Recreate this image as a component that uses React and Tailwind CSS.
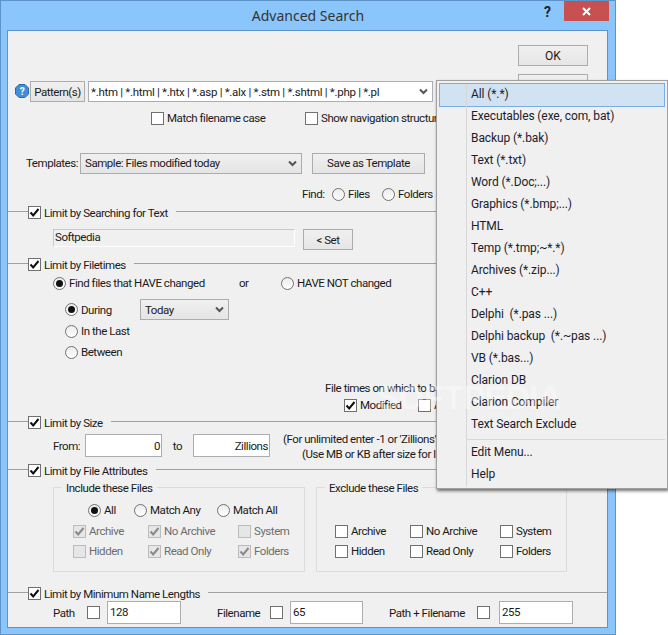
import React from 'react';

const MENU_ITEMS = [
    'All (*.*)',
    'Executables (exe, com, bat)',
    'Backup (*.bak)',
    'Text (*.txt)',
    'Word (*.Doc;...)',
    'Graphics (*.bmp;...)',
    'HTML',
    'Temp (*.tmp;~*.*)',
    'Archives (*.zip...)',
    'C++',
    'Delphi  (*.pas ...)',
    'Delphi backup  (*.~pas ...)',
    'VB (*.bas...)',
    'Clarion DB',
    'Clarion Compiler',
    'Text Search Exclude',
];

const Chevron = ({className = ''}) => (
    <svg width="9" height="7" viewBox="0 0 9 7" className={className}>
        <path d="M1 1.5 L4.5 5 L8 1.5" fill="none" stroke="#555" strokeWidth="2" />
    </svg>
);

const Check = ({checked, disabled, label, className = '', labelClass = ''}) => (
    <div className={`flex items-center h-4 ${className}`}>
        <span className={`w-[13px] h-[13px] border flex items-center justify-center shrink-0 ${disabled ? 'bg-[#e6e6e6] border-[#bcbcbc]' : 'bg-white border-[#707070]'}`}>
            {checked && (
                <svg width="11" height="11" viewBox="0 0 11 11">
                    <path d="M1.5 5.5 L4.2 8.5 L9.5 2" fill="none" stroke={disabled ? '#8a8a8a' : '#111'} strokeWidth="2" />
                </svg>
            )}
        </span>
        {label && <span className={`ml-[3px] whitespace-nowrap ${disabled ? 'text-[#6d6d6d]' : ''} ${labelClass}`}>{label}</span>}
    </div>
);

const Radio = ({checked, label, className = ''}) => (
    <div className={`flex items-center h-4 ${className}`}>
        <span className="w-[13px] h-[13px] rounded-full border border-[#707070] bg-gradient-to-b from-[#ececec] to-white flex items-center justify-center shrink-0">
            {checked && <span className="w-[7px] h-[7px] rounded-full bg-[#111]" />}
        </span>
        <span className="ml-[3px] whitespace-nowrap">{label}</span>
    </div>
);

const Button = ({children, className = ''}) => (
    <div className={`h-[21px] border border-[#acacac] bg-gradient-to-b from-[#f0f0f0] to-[#e5e5e5] flex items-center justify-center ${className}`}>
        {children}
    </div>
);

const Select = ({value, className = ''}) => (
    <div className={`h-[21px] border border-[#acacac] bg-gradient-to-b from-[#f0f0f0] to-[#e5e5e5] flex items-center justify-between pl-[4px] pr-[4px] ${className}`}>
        <span>{value}</span>
        <Chevron />
    </div>
);

const Input = ({value, className = ''}) => (
    <div className={`h-[23px] border border-[#abadb3] bg-white flex items-center ${className}`}>{value}</div>
);

const SectionHeader = ({label, className = ''}) => (
    <div className={`flex h-[13px] items-start ${className}`}>
        <div className="w-5 h-px bg-[#a0a0a0] mt-[5px]" />
        <Check checked label={label} className="h-[13px]" />
        <div className="flex-1 h-px bg-[#a0a0a0] mt-[5px] ml-2" />
    </div>
);

const MenuRow = ({label, active}) => (
    <div className={`flex ${active ? 'bg-[#d1e2f2] border border-[#78aee5] -my-px h-[24px] items-stretch' : 'h-[22px]'}`}>
        <div className={active ? 'w-[26px]' : 'w-[27px]'} />
        <div className="flex-1 border-l border-[#d7d7d7] pl-[4px] pb-[2px] flex items-center whitespace-pre">{label}</div>
    </div>
);

export default function App() {
    return (
        <div className="relative w-[668px] h-[635px] bg-white overflow-hidden text-[11.5px] leading-4 text-[#1a1a1a] tracking-[-0.45px] font-['Roboto',sans-serif]">
            {/* dialog window */}
            <div className="w-[616px] h-[635px] bg-[#8ac5fb] border border-[#5d93c6] flex flex-col">
                <div className="h-[29px] flex items-start relative shrink-0">
                    <div className="flex-1 text-center text-[14px] leading-[29px] tracking-normal text-[#333] font-['Noto_Sans',sans-serif]">Advanced Search</div>
                    <div className="absolute left-[543px] top-[1px] text-[14px] font-bold leading-5 text-[#222]">?</div>
                    <div className="absolute left-[563px] top-0 w-[45px] h-[20px] bg-[#c75050] flex items-center justify-center">
                        <svg width="9" height="9" viewBox="0 0 9 9">
                            <path d="M1 1 L8 8 M8 1 L1 8" stroke="#fff" strokeWidth="2" />
                        </svg>
                    </div>
                </div>

                <div className="w-[601px] ml-[6px] h-[598px] border border-[#5d93c6] bg-[#f0f0f0]">
                    {/* OK and the button hidden behind the menu */}
                    <div className="pt-[14px] ml-[510px]">
                        <Button className="w-[70px] text-[12px] tracking-normal">OK</Button>
                        <Button className="w-[70px] mt-2" />
                    </div>

                    <div className="flex -mt-[14px] h-[21px] items-center">
                        <svg width="14" height="14" viewBox="0 0 14 14" className="ml-[7px] -mt-[2px]">
                            <path d="M4 0.5 H10 L13.5 4 V10 L10 13.5 H4 L0.5 10 V4 Z" fill="#3f8fdc" stroke="#2a6aa8" />
                            <text x="7" y="11" textAnchor="middle" fontSize="10" fontWeight="bold" fill="#fff">?</text>
                        </svg>
                        <Button className="w-[55px] ml-[1px]">Pattern(s)</Button>
                        <div className="ml-[3px] w-[345px] h-[21px] border border-[#abadb3] bg-white flex items-center justify-between pl-[2px] pr-[4px] tracking-[-0.3px]">
                            <span>*.htm | *.html | *.htx | *.asp | *.alx | *.stm | *.shtml | *.php | *.pl</span>
                            <Chevron />
                        </div>
                    </div>

                    <div className="flex mt-2 ml-[143px]">
                        <Check label="Match filename case" className="w-[154px]" />
                        <Check label="Show navigation structure" />
                    </div>

                    <div className="flex items-center mt-[26px] ml-[18px] h-[22px]">
                        <span className="w-[54px]">Templates:</span>
                        <Select value="Sample: Files modified today" className="w-[222px]" />
                        <Button className="w-[113px] ml-[10px]">Save as Template</Button>
                    </div>

                    <div className="flex items-center mt-3 ml-[294px] h-4">
                        <span className="w-[30px]">Find:</span>
                        <Radio label="Files" className="w-[50px]" />
                        <Radio label="Folders" />
                    </div>

                    <SectionHeader label="Limit by Searching for Text" className="mt-1" />
                    <div className="flex mt-[10px] ml-[45px]">
                        <div className="w-[242px] h-[18px] border border-[#c8c8c8] border-b-white border-r-white flex items-center pl-[1px] pb-[2px]">Softpedia</div>
                        <Button className="w-[50px] ml-2">&lt; Set</Button>
                    </div>

                    <SectionHeader label="Limit by Filetimes" className="mt-2" />
                    <div className="flex mt-1 ml-[45px]">
                        <Radio checked label="Find files that HAVE changed" className="w-[186px]" />
                        <span className="w-[42px]">or</span>
                        <Radio label="HAVE NOT changed" />
                    </div>
                    <div className="flex items-center mt-2 ml-[57px] h-[21px]">
                        <Radio checked label="During" className="w-[75px]" />
                        <Select value="Today" className="w-[89px]" />
                    </div>
                    <Radio label="In the Last" className="mt-[3px] ml-[57px]" />
                    <Radio label="Between" className="mt-[5px] ml-[57px]" />

                    <div className="mt-[20px] ml-[317px] h-[15px] whitespace-nowrap">File times on which to base</div>
                    <div className="flex mt-[2px] ml-[336px]">
                        <Check checked label="Modified" className="w-[74px]" />
                        <Check label="Accessed" />
                    </div>

                    <SectionHeader label="Limit by Size" className="mt-[3px]" />
                    <div className="flex items-center mt-[5px] ml-[45px] h-[23px]">
                        <span className="w-[32px]">From:</span>
                        <Input value="0" className="w-[77px] justify-end pr-[1px]" />
                        <span className="w-[31px] text-center">to</span>
                        <Input value="Zillions" className="w-[77px] justify-end pr-[1px]" />
                        <div className="ml-[13px] pt-[3px] leading-[15px] whitespace-nowrap">
                            <div>(For unlimited enter -1 or 'Zillions')</div>
                            <div className="ml-[19px]">(Use MB or KB after size for large files)</div>
                        </div>
                    </div>

                    <SectionHeader label="Limit by File Attributes" className="mt-[7px]" />
                    <div className="flex mt-[2px] ml-[45px] h-[93px]">
                        <fieldset className="w-[252px] border border-[#dcdcdc]">
                            <legend className="ml-2 px-1 h-4 pt-px">Include these Files</legend>
                            <div className="flex mt-[7px] ml-[34px]">
                                <Radio checked label="All" className="w-[46px]" />
                                <Radio label="Match Any" className="w-[83px]" />
                                <Radio label="Match All" />
                            </div>
                            <div className="flex mt-[5px] ml-[19px]">
                                <Check checked disabled label="Archive" className="w-[75px]" />
                                <Check checked disabled label="No Archive" className="w-[90px]" />
                                <Check disabled label="System" />
                            </div>
                            <div className="flex mt-1 ml-[19px]">
                                <Check disabled label="Hidden" className="w-[75px]" />
                                <Check checked disabled label="Read Only" className="w-[90px]" />
                                <Check checked disabled label="Folders" />
                            </div>
                        </fieldset>
                        <fieldset className="w-[251px] ml-[11px] border border-[#dcdcdc]">
                            <legend className="ml-2 px-1 h-4 pt-px">Exclude these Files</legend>
                            <div className="flex mt-[28px] ml-[18px]">
                                <Check label="Archive" className="w-[75px]" />
                                <Check label="No Archive" className="w-[90px]" />
                                <Check label="System" />
                            </div>
                            <div className="flex mt-1 ml-[18px]">
                                <Check label="Hidden" className="w-[75px]" />
                                <Check label="Read Only" className="w-[90px]" />
                                <Check label="Folders" />
                            </div>
                        </fieldset>
                    </div>

                    <SectionHeader label="Limit by Minimum Name Lengths" className="mt-[15px]" />
                    <div className="flex items-center mt-[1px] ml-[45px] h-[23px]">
                        <span className="w-[34px]">Path</span>
                        <Check />
                        <Input value="128" className="w-[74px] ml-[7px] pl-[2px] pb-[2px]" />
                        <span className="w-[53px] ml-[36px]">Filename</span>
                        <Check />
                        <Input value="65" className="w-[73px] ml-[7px] pl-[2px] pb-[2px]" />
                        <span className="w-[88px] ml-[26px]">Path + Filename</span>
                        <Check />
                        <Input value="255" className="w-[74px] ml-[9px] pl-[2px] pb-[2px]" />
                    </div>
                </div>
            </div>

            {/* popup menu over the dialog */}
            <div className="absolute left-[436px] top-[80px] w-[232px] h-[409px] border border-[#a0a0a0] bg-[#f0f0f0] shadow-[1px_2px_3px_rgba(0,0,0,0.55)] pt-[3px] pl-[2px] pr-[2px] text-[12px] tracking-[-0.1px] text-[#1c1c2c]">
                {MENU_ITEMS.map((item, i) => (
                    <MenuRow key={item} label={item} active={i === 0} />
                ))}
                <div className="h-[6px] flex">
                    <div className="w-[27px]" />
                    <div className="flex-1 border-l border-[#d7d7d7] flex items-center">
                        <div className="w-full h-px bg-[#d7d7d7]" />
                    </div>
                </div>
                <MenuRow label="Edit Menu..." />
                <MenuRow label="Help" />
            </div>

            {/* watermark */}
            <div className="absolute left-[377px] top-[380px] text-[33px] leading-[36px] font-bold text-white/40 pointer-events-none tracking-[-0.5px] font-['Liberation_Sans',sans-serif]">SOFTPEDIA</div>
        </div>
    );
}
